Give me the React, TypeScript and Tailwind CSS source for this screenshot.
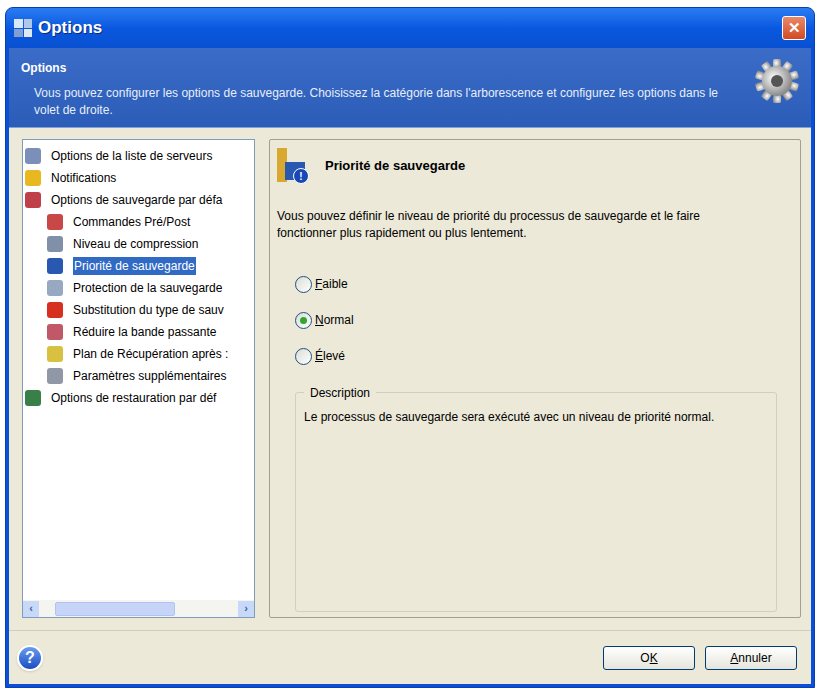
import React from "react";

const items: { t: string; indent: boolean; color: string; sel?: boolean }[] = [
  { t: "Options de la liste de serveurs", indent: false, color: "#7b8fb8" },
  { t: "Notifications", indent: false, color: "#e8b820" },
  { t: "Options de sauvegarde par défa", indent: false, color: "#c0404a" },
  { t: "Commandes Pré/Post", indent: true, color: "#c84848" },
  { t: "Niveau de compression", indent: true, color: "#8090a8" },
  { t: "Priorité de sauvegarde", indent: true, color: "#2858b0", sel: true },
  { t: "Protection de la sauvegarde", indent: true, color: "#98a8c0" },
  { t: "Substitution du type de sauv", indent: true, color: "#d83020" },
  { t: "Réduire la bande passante", indent: true, color: "#c05868" },
  { t: "Plan de Récupération après :", indent: true, color: "#d8c040" },
  { t: "Paramètres supplémentaires", indent: true, color: "#9098a8" },
  { t: "Options de restauration par déf", indent: false, color: "#388048" },
];

function Radio({ label, checked }: { label: React.ReactNode; checked?: boolean }) {
  return (
    <div className="flex items-center gap-[3px] h-[20px]">
      <span className="w-[17px] h-[17px] rounded-full border border-[#1c5180] bg-gradient-to-br from-[#dcdcd6] to-white flex items-center justify-center">
        {checked && <span className="w-[7px] h-[7px] rounded-full bg-[#2fa82f]" />}
      </span>
      <span>{label}</span>
    </div>
  );
}

export default function App() {
  return (
    <div className="w-[820px] h-[692px] bg-white pt-[7px] px-[5px] pb-[4px]" style={{ fontFamily: "'Liberation Sans', Arial, sans-serif" }}>
      <div className="h-full flex flex-col rounded-t-[8px] overflow-hidden bg-[#0a4fd8] border border-[#0b3fb0]">
        {/* title bar */}
        <div className="h-[40px] flex items-center px-[8px] bg-gradient-to-b from-[#2a7cf2] via-[#0a58e0] to-[#0850d0] text-white">
          <div className="w-[18px] h-[18px] mr-[6px] grid grid-cols-2 gap-[1px]">
            <span className="bg-[#d8e8f8]" /><span className="bg-[#b0c8e8]" /><span className="bg-[#80a0d0]" /><span className="bg-[#e0e8f0]" />
          </div>
          <span className="text-[17px] font-bold" style={{ textShadow: "1px 1px #0a2a80" }}>Options</span>
          <div className="flex-1" />
          <div className="w-[24px] h-[24px] rounded-[3px] border border-white bg-gradient-to-b from-[#e8886a] to-[#d04a20] flex items-center justify-center text-white font-bold text-[15px]">✕</div>
        </div>
        {/* header */}
        <div className="h-[80px] mx-[3px] bg-gradient-to-b from-[#3a6cc8] to-[#2a5cb8] text-white flex items-start px-[12px] pt-[11px] border-b border-[#7fa0d8]">
          <div className="flex-1">
            <div className="text-[12px] font-bold">Options</div>
            <div className="text-[12px] leading-[17px] mt-[8px] pl-[13px] pr-[20px] text-[#e8eef8]">
              Vous pouvez configurer les options de sauvegarde. Choisissez la catégorie dans l'arborescence et configurez les options dans le volet de droite.
            </div>
          </div>
          <svg width="44" height="52" viewBox="0 0 44 52" className="mt-[-4px]">
            <defs>
              <radialGradient id="g" cx="40%" cy="40%" r="60%"><stop offset="0" stopColor="#ffffff" /><stop offset="1" stopColor="#8a8a8a" /></radialGradient>
            </defs>
            <g transform="translate(22 26)">
              {Array.from({ length: 10 }).map((_, i) => (
                <rect key={i} x="-4" y="-22" width="8" height="10" rx="1.5" fill="url(#g)" transform={`rotate(${i * 36})`} />
              ))}
              <circle r="15" fill="url(#g)" />
              <circle r="6" fill="#555" />
            </g>
          </svg>
        </div>
        {/* body */}
        <div className="flex-1 mx-[3px] bg-[#ece9d8] flex flex-col">
          <div className="flex gap-[14px] pl-[13px] pr-[10px] pt-[11px] h-[490px]">
            <div className="w-[233px] h-full bg-white border border-[#7f9db9] flex flex-col text-[12px]">
              <div className="flex-1 pt-[5px] pl-[2px] overflow-hidden">
                {items.map((it) => (
                  <div key={it.t} className={`flex items-center h-[22px] whitespace-nowrap ${it.indent ? "pl-[22px]" : ""}`}>
                    <span className="w-[16px] h-[16px] rounded-[3px] mr-[10px] shrink-0" style={{ background: it.color }} />
                    <span className={it.sel ? "bg-[#316ac5] text-white px-[1px]" : "text-black"}>{it.t}</span>
                  </div>
                ))}
              </div>
              <div className="h-[17px] flex items-center bg-[#f4f4f0]">
                <span className="w-[16px] h-[16px] bg-[#c8d8f8] text-[#4060a0] text-[11px] font-bold flex items-center justify-center">‹</span>
                <span className="ml-[16px] w-[120px] h-[14px] rounded-[2px] bg-[#c6d4f7] border border-[#b0c4ee]" />
                <div className="flex-1" />
                <span className="w-[16px] h-[16px] bg-[#c8d8f8] text-[#4060a0] text-[11px] font-bold flex items-center justify-center">›</span>
              </div>
            </div>
            <div className="flex-1 h-full border border-[#a0a090] rounded-[2px] px-[7px] pt-[8px] text-[12px] flex flex-col">
              <div className="flex items-center gap-[16px]">
                <div className="w-[32px] h-[36px] relative">
                  <span className="absolute left-0 top-0 w-[10px] h-[34px] bg-[#d8a830]" />
                  <span className="absolute left-[8px] bottom-[4px] w-[20px] h-[18px] bg-[#2858b0]" />
                  <span className="absolute right-[0px] bottom-0 w-[16px] h-[16px] rounded-full bg-[#1848b8] border border-white text-white text-[10px] font-bold flex items-center justify-center">!</span>
                </div>
                <span className="font-bold text-[13px]">Priorité de sauvegarde</span>
              </div>
              <p className="mt-[24px] leading-[17px] pr-[40px]">Vous pouvez définir le niveau de priorité du processus de sauvegarde et le faire fonctionner plus rapidement ou plus lentement.</p>
              <div className="pl-[18px] mt-[32px] flex flex-col gap-[16px]">
                <Radio label={<><u>F</u>aible</>} />
                <Radio label={<><u>N</u>ormal</>} checked />
                <Radio label={<><u>É</u>levé</>} />
              </div>
              <div className="ml-[18px] mr-[16px] mt-[26px] h-[220px] border border-[#d0d0bf] rounded-[3px] relative px-[8px] pt-[16px]">
                <span className="absolute -top-[9px] left-[8px] bg-[#ece9d8] px-[6px]">Description</span>
                <p className="leading-[17px] max-w-[430px]">Le processus de sauvegarde sera exécuté avec un niveau de priorité normal.</p>
              </div>
            </div>
          </div>
          <div className="mt-[12px] border-t border-[#d0cdb8]" />
          <div className="flex-1 flex items-center px-[8px]">
            <div className="w-[26px] h-[26px] rounded-full bg-gradient-to-b from-[#6a9cf0] to-[#1a4cc0] border-2 border-white shadow text-white font-bold text-[16px] flex items-center justify-center">?</div>
            <div className="flex-1" />
            <button className="w-[92px] h-[24px] rounded-[3px] border border-[#003c74] bg-gradient-to-b from-white to-[#e6e5dc] text-[12px] mr-[10px]">O<u>K</u></button>
            <button className="w-[92px] h-[24px] rounded-[3px] border border-[#003c74] bg-gradient-to-b from-white to-[#e6e5dc] text-[12px] mr-[6px]"><u>A</u>nnuler</button>
          </div>
        </div>
        <div className="h-[3px]" />
      </div>
    </div>
  );
}
